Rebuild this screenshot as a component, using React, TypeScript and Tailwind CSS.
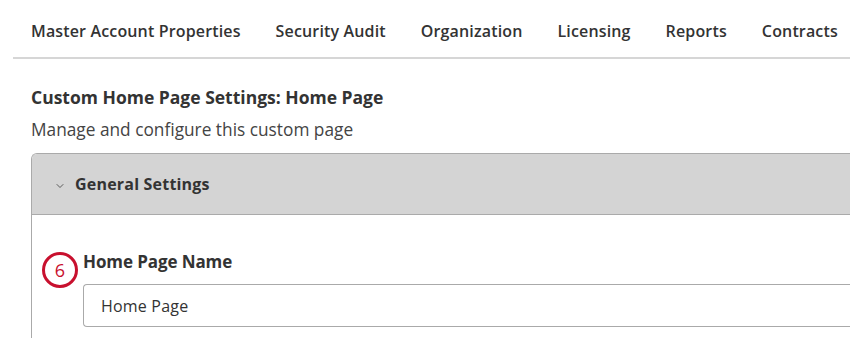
import { ChevronDown } from 'lucide-react';

const tabs = ['Master Account Properties', 'Security Audit', 'Organization', 'Licensing', 'Reports', 'Contracts'];

const App = () => {
  return (
    <div className="w-[850px] h-[338px] overflow-hidden bg-white text-[#333333]" style={{ fontFamily: '"Open Sans", "Noto Sans", sans-serif' }}>
      {/* Tabs */}
      <div className="ml-[13px] border-b-2 border-[#d6d6d6] h-[59px] flex items-center gap-[35px] pl-[18px] pt-[4px] whitespace-nowrap">
        {tabs.map((t) => (
          <span key={t} className="text-[16px] font-semibold tracking-[0.15px]">{t}</span>
        ))}
      </div>

      <div className="pl-[31px]">
        <h2 className="mt-[26px] text-[17.5px] font-bold leading-[24px]">
          Custom Home Page Settings: Home Page
        </h2>
        <p className="mt-[9px] text-[17.3px] leading-[24px] text-[#444444]">Manage and configure this custom page</p>

        {/* Panel */}
        <div className="mt-[11px] w-[830px] border border-[#aaaaaa] border-r-0 rounded-tl-[6px] overflow-hidden">
          <div className="h-[61px] bg-[#d4d4d4] border-b border-[#aaaaaa] flex items-center pl-[22px] gap-[9px]">
            <ChevronDown className="w-[12px] h-[12px] mt-[3px]" strokeWidth={1.5} />
            <span className="text-[16px] font-bold tracking-[0.2px]">General Settings</span>
          </div>
          <div className="h-[140px] relative">
            <div className="absolute left-[10px] top-[37px] w-[36px] h-[36px] rounded-full border-[3px] border-solid border-[#c8102e] flex items-center justify-center text-[18px] text-[#c8102e]">
              6
            </div>
            <div className="pl-[51px] pt-[35px]">
              <div className="text-[17px] font-bold leading-[24px] tracking-[-0.1px]">Home Page Name</div>
              <div className="mt-[10px] h-[43px] border border-[#aaaaaa] rounded-l-[4px] border-r-0 flex items-center pl-[17px] text-[16px] tracking-[0.2px]">
                Home Page
              </div>
            </div>
          </div>
        </div>
      </div>
    </div>
  );
};

export default App;
